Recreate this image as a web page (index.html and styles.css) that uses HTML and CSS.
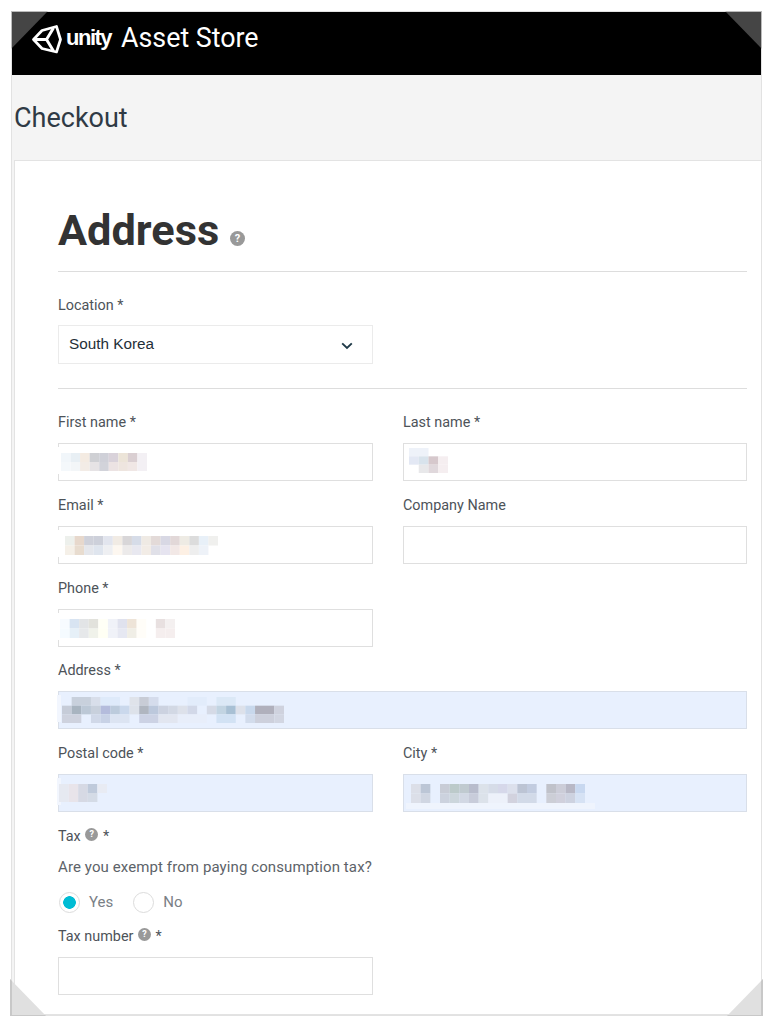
FILE: index.html
```html
<!DOCTYPE html>
<html lang="en">
<head>
<meta charset="utf-8">
<title>Checkout - Unity Asset Store</title>
<link rel="stylesheet" href="styles.css">
</head>
<body>
<div class="frame">
  <header class="topbar">
    <svg class="logo" viewBox="0 0 30 29" width="30" height="29" aria-hidden="true">
      <path d="M1.5 14.5 L10 5.5 L24.5 1.5 L28.5 14.5 L24.5 27 L10 23.5 Z" fill="none" stroke="#fff" stroke-width="2.7" stroke-linejoin="round"/>
      <path d="M1.5 14.5 H14.5 L21.5 3 M14.5 14.5 L21.5 26" fill="none" stroke="#fff" stroke-width="2.9"/>
    </svg>
    <span class="wordmark">unity</span>
    <span class="store">Asset Store</span>
  </header>
  <div class="pagehead"><h1 class="pagetitle">Checkout</h1></div>
  <main class="card">
    <h2 class="heading">Address <span class="help help-lg">?</span></h2>
    <hr class="rule rule-top">
    <div class="locfield">
      <label class="label">Location *</label>
      <div class="select">
        <span>South Korea</span>
        <svg class="chev" viewBox="0 0 12 8" width="12" height="8" aria-hidden="true"><path d="M1.2 1.4 L6 6 L10.8 1.4" fill="none" stroke="#1f3a48" stroke-width="1.9"/></svg>
      </div>
    </div>
    <hr class="rule rule-mid">
    <div class="grid">
      <div class="field">
        <label class="label">First name *</label>
        <div class="box">
          <input class="input" type="text">
          <span class="erase"></span>
          <svg class="mosaic m-first" viewBox="0 0 9 2" preserveAspectRatio="none" aria-hidden="true">
            <g>
              <rect x="0" y="0" width="1" height="1" fill="#f1f6fa"/><rect x="1" y="0" width="1" height="1" fill="#e8eff4"/><rect x="2" y="0" width="1" height="1" fill="#f4ebe2"/><rect x="3" y="0" width="1" height="1" fill="#cfd0d4"/><rect x="4" y="0" width="1" height="1" fill="#cfd0d8"/><rect x="5" y="0" width="1" height="1" fill="#d9d2da"/><rect x="6" y="0" width="1" height="1" fill="#ece4d8"/><rect x="7" y="0" width="1" height="1" fill="#dacfd2"/><rect x="8" y="0" width="1" height="1" fill="#f3f0f4"/>
              <rect x="0" y="1" width="1" height="1" fill="#f4f8fb"/><rect x="1" y="1" width="1" height="1" fill="#f3f6f8"/><rect x="2" y="1" width="1" height="1" fill="#f3ece6"/><rect x="3" y="1" width="1" height="1" fill="#e6e3e5"/><rect x="4" y="1" width="1" height="1" fill="#d2d3da"/><rect x="5" y="1" width="1" height="1" fill="#ece3e3"/><rect x="6" y="1" width="1" height="1" fill="#eee5df"/><rect x="7" y="1" width="1" height="1" fill="#f0e7e5"/><rect x="8" y="1" width="1" height="1" fill="#f3f0f4"/>
            </g>
          </svg>
        </div>
      </div>
      <div class="field">
        <label class="label">Last name *</label>
        <div class="box">
          <input class="input" type="text">
          <svg class="mosaic m-last" viewBox="0 0 4 3" preserveAspectRatio="none" aria-hidden="true">
            <rect x="0" y="0" width="2" height="1" fill="#eef2f9"/>
            <rect x="0" y="1" width="1" height="1" fill="#e3e8f4"/><rect x="1" y="1" width="1" height="1" fill="#d8e3ec"/><rect x="2" y="1" width="1" height="1" fill="#d6c8cc"/><rect x="3" y="1" width="1" height="1" fill="#f5eef0"/>
            <rect x="1" y="2" width="1" height="1" fill="#e8e8ea"/><rect x="2" y="2" width="1" height="1" fill="#e0d8dc"/><rect x="3" y="2" width="1" height="1" fill="#f5eef0"/>
          </svg>
        </div>
      </div>
      <div class="field">
        <label class="label">Email *</label>
        <div class="box">
          <input class="input" type="text">
          <span class="erase"></span>
          <svg class="mosaic m-email" viewBox="0 0 16 2" preserveAspectRatio="none" aria-hidden="true">
            <rect x="0" y="0" width="1" height="1" fill="#edf0ec"/><rect x="1" y="0" width="1" height="1" fill="#e7d8cc"/><rect x="2" y="0" width="1" height="1" fill="#cfd1da"/><rect x="3" y="0" width="1" height="1" fill="#cdd0da"/><rect x="4" y="0" width="1" height="1" fill="#e2e5ee"/><rect x="5" y="0" width="1" height="1" fill="#f1ebe4"/><rect x="6" y="0" width="1" height="1" fill="#d8d6d8"/><rect x="7" y="0" width="1" height="1" fill="#d6dce8"/><rect x="8" y="0" width="1" height="1" fill="#efeae4"/><rect x="9" y="0" width="1" height="1" fill="#e3dad8"/><rect x="10" y="0" width="1" height="1" fill="#d8d8e4"/><rect x="11" y="0" width="1" height="1" fill="#e2d8d8"/><rect x="12" y="0" width="1" height="1" fill="#eeebe4"/><rect x="13" y="0" width="1" height="1" fill="#dcdcdc"/><rect x="14" y="0" width="1" height="1" fill="#e8f0f8"/><rect x="15" y="0" width="1" height="1" fill="#f0f0ee"/>
            <rect x="0" y="1" width="1" height="1" fill="#f5f0e8"/><rect x="1" y="1" width="1" height="1" fill="#e8dccf"/><rect x="2" y="1" width="1" height="1" fill="#e5e7ec"/><rect x="3" y="1" width="1" height="1" fill="#dfe5ee"/><rect x="4" y="1" width="1" height="1" fill="#eeeff2"/><rect x="5" y="1" width="1" height="1" fill="#fdf7f0"/><rect x="6" y="1" width="1" height="1" fill="#eceaea"/><rect x="7" y="1" width="1" height="1" fill="#e8e8f0"/><rect x="8" y="1" width="1" height="1" fill="#f2ece6"/><rect x="9" y="1" width="1" height="1" fill="#e0e0e8"/><rect x="10" y="1" width="1" height="1" fill="#e6e4f0"/><rect x="11" y="1" width="1" height="1" fill="#f2e8e6"/><rect x="12" y="1" width="1" height="1" fill="#fdf0e4"/><rect x="13" y="1" width="1" height="1" fill="#eeeeee"/><rect x="14" y="1" width="1" height="1" fill="#eef2f8"/>
          </svg>
        </div>
      </div>
      <div class="field">
        <label class="label">Company Name</label>
        <div class="box"><input class="input" type="text"></div>
      </div>
      <div class="field">
        <label class="label">Phone *</label>
        <div class="box">
          <input class="input" type="text">
          <span class="erase"></span>
          <svg class="mosaic m-phone" viewBox="0 0 12 2" preserveAspectRatio="none" aria-hidden="true">
            <rect x="0" y="0" width="1" height="1" fill="#f7fbff"/><rect x="1" y="0" width="1" height="1" fill="#d8e4f2"/><rect x="2" y="0" width="1" height="1" fill="#e2e4e6"/><rect x="3" y="0" width="1" height="1" fill="#e2e2dc"/><rect x="4" y="0" width="1" height="1" fill="#fffff6"/><rect x="5" y="0" width="1" height="1" fill="#f0f2f8"/><rect x="6" y="0" width="1" height="1" fill="#e0e2ee"/><rect x="7" y="0" width="1" height="1" fill="#eee4d8"/><rect x="8" y="0" width="1" height="1" fill="#fffdf8"/><rect x="10" y="0" width="1" height="1" fill="#e8e0e0"/><rect x="11" y="0" width="1" height="1" fill="#f4f0f0"/>
            <rect x="0" y="1" width="1" height="1" fill="#f5fbff"/><rect x="1" y="1" width="1" height="1" fill="#e6f0f8"/><rect x="2" y="1" width="1" height="1" fill="#e6e8ea"/><rect x="3" y="1" width="1" height="1" fill="#f0f2ea"/><rect x="4" y="1" width="1" height="1" fill="#fffff4"/><rect x="5" y="1" width="1" height="1" fill="#f0f2f8"/><rect x="6" y="1" width="1" height="1" fill="#e6e8f2"/><rect x="7" y="1" width="1" height="1" fill="#f0eee6"/><rect x="8" y="1" width="1" height="1" fill="#fffdf8"/><rect x="10" y="1" width="1" height="1" fill="#f5eeee"/><rect x="11" y="1" width="1" height="1" fill="#f5eeee"/>
          </svg>
        </div>
      </div>
      <div class="field"></div>
      <div class="field span2">
        <label class="label">Address *</label>
        <div class="box">
          <input class="input filled" type="text">
          <span class="erase erase-blue"></span>
          <svg class="mosaic m-address" viewBox="0 0 23 3" preserveAspectRatio="none" aria-hidden="true">
            <rect x="1" y="0" width="2" height="1" fill="#c8d0dc"/><rect x="3" y="0" width="1" height="1" fill="#d8deea"/><rect x="4" y="0" width="2" height="1" fill="#deeafa"/><rect x="7" y="0" width="1" height="1" fill="#dfe3ea"/><rect x="8" y="0" width="1" height="1" fill="#c8ccd6"/><rect x="9" y="0" width="1" height="1" fill="#d5dcec"/><rect x="13" y="0" width="2" height="1" fill="#e2ecfb"/><rect x="16" y="0" width="2" height="1" fill="#dbe8f6"/>
            <rect x="0" y="1" width="1" height="1" fill="#c6ccd8"/><rect x="1" y="1" width="1" height="1" fill="#a8b4c0"/><rect x="2" y="1" width="1" height="1" fill="#bcc8d6"/><rect x="3" y="1" width="1" height="1" fill="#c8d0dc"/><rect x="4" y="1" width="1" height="1" fill="#b4bcdc"/><rect x="5" y="1" width="1" height="1" fill="#bccbdc"/><rect x="6" y="1" width="1" height="1" fill="#cad8ec"/><rect x="7" y="1" width="1" height="1" fill="#dde2ea"/><rect x="8" y="1" width="1" height="1" fill="#b0b6c0"/><rect x="9" y="1" width="1" height="1" fill="#bcc8dc"/><rect x="10" y="1" width="1" height="1" fill="#ccd2e0"/><rect x="11" y="1" width="1" height="1" fill="#d2d8e4"/><rect x="12" y="1" width="1" height="1" fill="#dde1ea"/><rect x="13" y="1" width="1" height="1" fill="#d2d8e8"/><rect x="15" y="1" width="1" height="1" fill="#d5dae6"/><rect x="16" y="1" width="1" height="1" fill="#c2d4e2"/><rect x="17" y="1" width="1" height="1" fill="#a8c0d4"/><rect x="18" y="1" width="1" height="1" fill="#dde1ea"/><rect x="19" y="1" width="1" height="1" fill="#c8d8ec"/><rect x="20" y="1" width="2" height="1" fill="#b0b0bc"/><rect x="22" y="1" width="1" height="1" fill="#cfd2de"/>
            <rect x="0" y="2" width="2" height="1" fill="#ced2de"/><rect x="3" y="2" width="1" height="1" fill="#d0d8e8"/><rect x="4" y="2" width="1" height="1" fill="#c8d2e6"/><rect x="5" y="2" width="2" height="1" fill="#dce4f2"/><rect x="8" y="2" width="2" height="1" fill="#ccd2e4"/><rect x="10" y="2" width="2" height="1" fill="#e2e6f0"/><rect x="12" y="2" width="3" height="1" fill="#e8eefa"/><rect x="16" y="2" width="2" height="1" fill="#d2e2f4"/><rect x="19" y="2" width="1" height="1" fill="#d2dcec"/><rect x="20" y="2" width="2" height="1" fill="#cdd0dc"/><rect x="22" y="2" width="1" height="1" fill="#d2d6e2"/>
          </svg>
        </div>
      </div>
      <div class="field">
        <label class="label">Postal code *</label>
        <div class="box">
          <input class="input filled" type="text">
          <span class="erase erase-blue"></span>
          <svg class="mosaic m-postal" viewBox="0 0 5 2" preserveAspectRatio="none" aria-hidden="true">
            <rect x="0" y="0" width="1" height="2" fill="#e6e9f1"/><rect x="1" y="0" width="1" height="2" fill="#e8e4ea"/><rect x="2" y="0" width="1" height="2" fill="#d6d9e4"/><rect x="3" y="0" width="1" height="1" fill="#bfcadb"/><rect x="3" y="1" width="1" height="1" fill="#d4dbe6"/><rect x="4" y="0" width="1" height="1" fill="#e8ebf3"/>
          </svg>
        </div>
      </div>
      <div class="field">
        <label class="label">City *</label>
        <div class="box">
          <input class="input filled" type="text">
          <span class="strip"></span>
          <svg class="mosaic m-city" viewBox="0 0 18 2" preserveAspectRatio="none" aria-hidden="true">
            <rect x="0" y="0" width="1" height="1" fill="#dcdfe8"/><rect x="1" y="0" width="1" height="1" fill="#bcc6d6"/><rect x="3" y="0" width="1" height="1" fill="#c8ccd6"/><rect x="4" y="0" width="1" height="1" fill="#bccaca"/><rect x="5" y="0" width="1" height="1" fill="#c0cad0"/><rect x="6" y="0" width="1" height="1" fill="#b8bccc"/><rect x="7" y="0" width="1" height="1" fill="#dce2ea"/><rect x="8" y="0" width="1" height="1" fill="#d6dce8"/><rect x="9" y="0" width="1" height="1" fill="#d6d8ea"/><rect x="10" y="0" width="1" height="1" fill="#dce0ec"/><rect x="11" y="0" width="1" height="1" fill="#bcc4d4"/><rect x="12" y="0" width="1" height="1" fill="#c2cce0"/><rect x="14" y="0" width="1" height="1" fill="#c0c2ca"/><rect x="15" y="0" width="1" height="1" fill="#cccdd8"/><rect x="16" y="0" width="1" height="1" fill="#b8b8c6"/><rect x="17" y="0" width="1" height="1" fill="#c8d8f0"/>
            <rect x="0" y="1" width="1" height="1" fill="#dcdfe8"/><rect x="1" y="1" width="1" height="1" fill="#d0d6e2"/><rect x="3" y="1" width="1" height="1" fill="#ccd2de"/><rect x="4" y="1" width="1" height="1" fill="#ccd6dc"/><rect x="5" y="1" width="1" height="1" fill="#d2d8e4"/><rect x="6" y="1" width="1" height="1" fill="#c8ccda"/><rect x="7" y="1" width="1" height="1" fill="#dce2ea"/><rect x="8" y="1" width="2" height="1" fill="#edf1fa"/><rect x="10" y="1" width="1" height="1" fill="#d2d2de"/><rect x="11" y="1" width="2" height="1" fill="#d2dae8"/><rect x="14" y="1" width="1" height="1" fill="#ccced6"/><rect x="15" y="1" width="1" height="1" fill="#d0d0dc"/><rect x="16" y="1" width="1" height="1" fill="#cdd2e0"/><rect x="17" y="1" width="1" height="1" fill="#d6e2f4"/>
          </svg>
        </div>
      </div>
    </div>
    <div class="tax">
      <label class="label">Tax <span class="help help-sm">?</span> *</label>
      <p class="question">Are you exempt from paying consumption tax?</p>
      <div class="radios">
        <span class="radio radio-on"></span><span class="radiotext">Yes</span>
        <span class="radio"></span><span class="radiotext">No</span>
      </div>
      <label class="label taxnum">Tax number <span class="help help-sm">?</span> *</label>
      <div class="box box-narrow"><input class="input" type="text"></div>
    </div>
  </main>
  <span class="corner corner-tl"></span>
  <span class="corner corner-tr"></span>
  <span class="corner corner-bl"></span>
  <span class="corner corner-br"></span>
</div>
</body>
</html>
```
FILE: styles.css
```css
* { box-sizing: border-box; }
html, body { margin: 0; padding: 0; background: #fff; }
body { font-family: Roboto, "Liberation Sans", sans-serif; color: #4a4f55; }
.frame {
  position: relative;
  width: 751px;
  height: 1005px;
  margin: 11px 0 0 11px;
  background: #f4f4f4;
  border: 1px solid #e2e2e2;
  display: flex;
  flex-direction: column;
}
.topbar {
  height: 63px;
  background: #000;
  display: flex;
  align-items: flex-start;
  padding: 12px 0 0 20px;
  flex: none;
}
.logo { display: block; margin-top: 1px; flex: none; }
.wordmark {
  color: #fff;
  font: 700 22px/28px "Liberation Sans", sans-serif;
  letter-spacing: -1.5px;
  margin-left: 4px;
}
.store {
  color: #fff;
  font: 400 26.8px/28px Roboto, sans-serif;
  margin-left: 10px;
}
.pagehead { height: 85px; display: flex; align-items: center; padding-left: 2px; flex: none; }
.pagetitle { margin: 0; font: 400 27px/32px Roboto, sans-serif; color: #2f3a45; }
.card {
  margin-left: 2px;
  flex: 1;
  background: #fff;
  border: 1px solid #e3e3e3;
  border-right: 0;
  padding: 0 14px 0 43px;
}
.heading {
  margin: 0;
  height: 110px;
  padding-top: 44px;
  font: 700 43.3px/52px Roboto, sans-serif;
  color: #333;
}
.help {
  display: inline-block;
  border-radius: 50%;
  background: #999;
  color: #fff;
  font-family: Roboto, sans-serif;
  font-weight: 700;
  text-align: center;
}
.help-lg { width: 15px; height: 15px; font-size: 11px; line-height: 15px; vertical-align: 3px; margin-left: 0; }
.help-sm { width: 13px; height: 13px; font-size: 9px; line-height: 13px; vertical-align: 4px; margin: 0 1px; }
.rule { margin: 0; border: 0; border-top: 1px solid #ddd; }
.label { display: block; font-size: 14.4px; line-height: 22px; color: #4d5359; }
.locfield { padding-top: 23px; }
.select {
  margin-top: 8px;
  width: 315px;
  height: 39px;
  border: 1px solid #ebebeb;
  background: #fff;
  display: flex;
  align-items: center;
  justify-content: space-between;
  padding: 0 19px 2px 10px;
  font: 400 15.3px/20px "Liberation Sans", sans-serif;
  color: #1f2f38;
}
.chev { display: block; margin-top: 5px; }
.rule-mid { margin-top: 24px; }
.grid {
  display: grid;
  grid-template-columns: 315px 344px;
  column-gap: 30px;
  padding-top: 23px;
}
.field { height: 82.75px; }
.span2 { grid-column: 1 / 3; }
.box { position: relative; margin-top: 9px; height: 38px; }
.box-narrow { width: 315px; }
.input {
  display: block;
  width: 100%;
  height: 38px;
  border: 1px solid #dfdfdf;
  background: #fff;
  padding: 0 10px;
  margin: 0;
  border-radius: 0;
  outline: 0;
}
.filled { background: #e8f0fe; border-color: #d9dfe9; }
.erase { position: absolute; left: -1px; top: 4px; bottom: 7px; width: 4px; background: #fff; }
.erase-blue { background: #f2f6fe; }
.strip { position: absolute; left: 3px; top: 29px; width: 189px; height: 6px; background: #eff4fd; }
.mosaic { position: absolute; filter: blur(0.7px); display: block; }
.m-first { left: 3px; top: 10px; width: 86px; height: 18px; }
.m-last { left: 6px; top: 5px; width: 39px; height: 25px; }
.m-email { left: 7px; top: 10px; width: 153px; height: 19px; }
.m-phone { left: 2px; top: 10px; width: 115px; height: 19px; }
.m-address { left: 4px; top: 6px; width: 222px; height: 26px; }
.m-postal { left: 1px; top: 10px; width: 48px; height: 18px; }
.m-city { left: 8px; top: 10px; width: 174px; height: 19px; }
.tax { margin-top: 0; }
.question { margin: 9px 0 0; font-size: 15px; line-height: 20px; letter-spacing: .1px; color: #5d6369; font-weight: 400; }
.radios { display: flex; align-items: center; height: 24px; margin-top: 14px; padding-left: 1px; }
.radio {
  width: 21px;
  height: 21px;
  border: 1px solid #dcdcdc;
  border-radius: 50%;
  background: #fff;
  flex: none;
}
.radio-on { background: radial-gradient(circle at center, #00bcd4 0, #00bcd4 6px, #fff 6.6px); }
.radiotext { font-size: 15px; line-height: 24px; color: #7a8086; margin: -1px 20px 0 9px; }
.taxnum { margin-top: 11px; }
.corner { position: absolute; width: 37px; height: 38px; pointer-events: none; }
.corner-tl { left: -1px; top: -1px; background: rgba(255,255,255,.27); border-left: 1px solid #bbb; border-top: 1px solid #bbb; clip-path: polygon(0 0, 100% 0, 0 100%); }
.corner-tr { right: -1px; top: -1px; background: rgba(255,255,255,.27); border-right: 1px solid #bbb; border-top: 1px solid #bbb; clip-path: polygon(0 0, 100% 0, 100% 100%); }
.corner-bl { left: -2px; bottom: -2px; background: #e0e0e0; border-left: 2px solid #c8c8c8; border-bottom: 2px solid #c8c8c8; clip-path: polygon(0 0, 100% 100%, 0 100%); }
.corner-br { right: -2px; bottom: -2px; background: #e0e0e0; border-right: 2px solid #c8c8c8; border-bottom: 2px solid #c8c8c8; clip-path: polygon(100% 0, 100% 100%, 0 100%); }
```
